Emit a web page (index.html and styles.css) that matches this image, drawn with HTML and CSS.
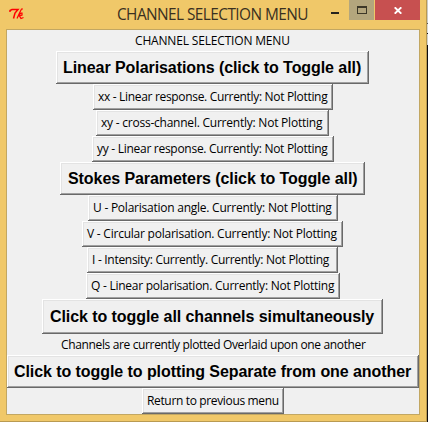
FILE: index.html
```html
<!DOCTYPE html>
<html lang="en">
<head>
<meta charset="utf-8">
<title>CHANNEL SELECTION MENU</title>
<link rel="stylesheet" href="styles.css">
</head>
<body>
<div class="window">
  <header class="titlebar">
    <svg class="logo" width="16" height="13" viewBox="0 0 16 13" fill="none" stroke="#f00"><path stroke-width="1.500" d="M1 4V2.500L3 1.500H9L6 5L4.500 10.500"/><path d="M14 1H12.500L10.500 5L8 10.500M9.500 7.500L12 5H13V7L10.500 8L12 10.500L14.500 9.500" stroke-width="1.200"/></svg>
    <h1 class="title"><span>CHANNEL SELECTION MENU</span></h1>
    <div class="controls">
      <div class="minimise"></div>
      <div class="maximise"><i></i></div>
      <div class="close"><svg width="8" height="7" viewBox="0 0 8 7" stroke="#fff" stroke-width="1.900"><path d="M.7.3L7.300 6.700M7.300.3L.7 6.700"/></svg></div>
    </div>
  </header>
  <main class="client">
    <p class="label heading"><span>CHANNEL SELECTION MENU</span></p>
    <button class="btn big linear"><span>Linear Polarisations (click to Toggle all)</span></button>
    <button class="btn xx"><span>xx - Linear response. Currently: Not Plotting</span></button>
    <button class="btn xy"><span>xy - cross-channel. Currently: Not Plotting</span></button>
    <button class="btn yy"><span>yy - Linear response. Currently: Not Plotting</span></button>
    <button class="btn big stokes"><span>Stokes Parameters (click to Toggle all)</span></button>
    <button class="btn u"><span>U - Polarisation angle. Currently: Not Plotting</span></button>
    <button class="btn v"><span>V - Circular polarisation. Currently: Not Plotting</span></button>
    <button class="btn i"><span>I - Intensity: Currently. Currently: Not Plotting</span></button>
    <button class="btn q"><span>Q - Linear polarisation. Currently: Not Plotting</span></button>
    <button class="btn big all"><span>Click to toggle all channels simultaneously</span></button>
    <p class="label status"><span>Channels are currently plotted Overlaid upon one another</span></p>
    <button class="btn big mode"><span>Click to toggle to plotting Separate from one another</span></button>
    <button class="btn return"><span>Return to previous menu</span></button>
  </main>
</div>
</body>
</html>
```
FILE: styles.css
```css
* { box-sizing: border-box; }
body {
  margin: 0; width: 428px; height: 422px; overflow: hidden;
  background: linear-gradient(#c9c9c4 0 23px, #55554f 23px 24px, #d8d8d4 24px 33px, #111 33px 34px, #d0d0cc 34px 45px, #0d0d12 45px);
}
.window {
  width: 427px; height: 422px;
  padding: 0 6px 6px 6px;
  background: #f0c869;
  border-right: 1px solid #b99a51;
  border-bottom: 1px solid #b99a51;
}
.titlebar { display: flex; height: 29px; font-family: "Open Sans", sans-serif; }
.logo { flex: none; margin: 8px 0 0 3px; }
.title { flex: none; width: 192px; margin: 0 0 0 92px; font-size: 15.4px; font-weight: 400; line-height: 29px; color: #3a3021; white-space: nowrap; letter-spacing: -0.57px; }
.controls { display: flex; flex: none; height: 20px; margin-left: 22px; }
.minimise { width: 8px; height: 2px; margin: 12px 10px 0 0; background: #26231d; }
.maximise { width: 25px; height: 20px; padding: 6px 7px 0 8px; background: #b3a67d; }
.maximise i { display: block; width: 10px; height: 8px; border: 1px solid #3c3828; border-top-width: 2px; }
.close { display: flex; width: 45px; height: 20px; margin-left: 1px; padding: 7px 0 0 19px; background: #c75050; }
.client {
  display: flex; flex-direction: column; align-items: flex-start;
  width: 414px; height: 386px;
  border: 1px solid #c2a762;
  background: #f0f0f0;
  font: 12px "Open Sans", sans-serif; color: #000;
}
.label { height: 21px; margin: 0; line-height: 21px; white-space: nowrap; }
.btn {
  position: relative; flex: none; height: 26px; margin: 0; padding: 0 0 0 5px;
  border: 0; background: #f0f0f0; color: #000; text-align: left;
  font: 12px/26px "Open Sans", sans-serif; white-space: nowrap;
  box-shadow: inset -1px -1px #696969, inset 1px 1px #fff, inset -2px -2px #a0a0a0, inset 2px 2px #e3e3e3;
}
.big { height: 33px; font: bold 16px/33px "Liberation Sans", Arial, sans-serif; padding-left: 7px; letter-spacing: -0.07px; }
.heading { margin-left: 128px; letter-spacing: -0.17px; }
.linear { margin-left: 49px; width: 313px; }
.xx { margin-left: 86px; width: 240px; letter-spacing: -0.32px; }
.xy { margin-left: 89px; width: 233px; letter-spacing: -0.23px; }
.yy { margin-left: 85px; width: 242px; letter-spacing: -0.28px; }
.stokes { margin-left: 53px; width: 305px; padding-left: 8px; }
.u { margin-left: 81px; width: 250px; letter-spacing: -0.24px; }
.v { margin-left: 75px; width: 261px; letter-spacing: -0.23px; }
.i { margin-left: 80px; width: 251px; letter-spacing: -0.29px; }
.q { margin-left: 79px; width: 254px; letter-spacing: -0.25px; }
.all { margin-left: 35px; width: 341px; height: 35px; line-height: 35px; padding-left: 8px; }
.status { margin-left: 54px; letter-spacing: -0.36px; }
.mode { width: 412px; }
.return { margin-left: 135px; width: 142px; letter-spacing: -0.35px; }
```
